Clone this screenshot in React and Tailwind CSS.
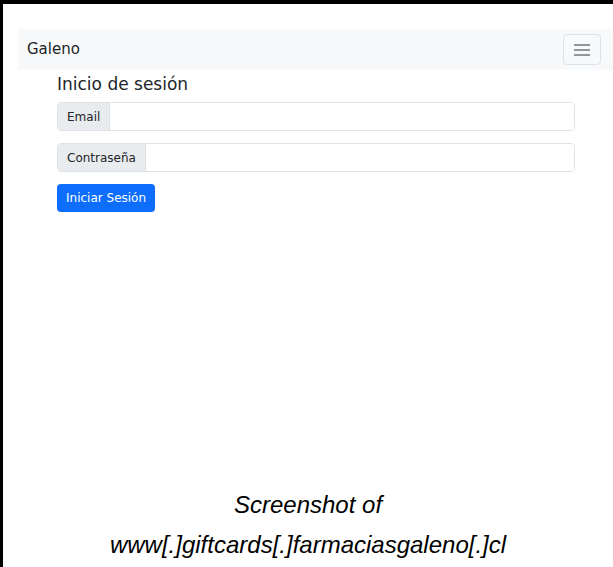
export default function App() {
  return (
    <div className="w-[613px] h-[567px] bg-black pt-[4px] pl-[3px] overflow-hidden">
      <div className="relative h-full bg-white pt-[25px]" style={{ fontFamily: '"DejaVu Sans", sans-serif' }}>
        {/* navbar */}
        <div className="ml-[15px] h-[41px] bg-[#f8f9fa] flex items-center justify-between pl-[9px] pr-[12px]">
          <span className="text-[15px] text-[#212529] leading-none">Galeno</span>
          <button className="w-[38px] h-[31px] border border-[#dee2e6] rounded-[4px] flex items-center justify-center">
            <svg width="20" height="16" viewBox="0 0 20 16">
              <path d="M2 3h16M2 8h16M2 13h16" stroke="#6c757d" strokeWidth="1.5" />
            </svg>
          </button>
        </div>

        {/* login form */}
        <div className="ml-[54px] w-[518px]">
          <h4 className="text-[17px] text-[#212529] leading-none mt-[6px] mb-[9px]">Inicio de sesión</h4>
          <div className="flex h-[29px] border border-[#dee2e6] rounded-[4px] overflow-hidden">
            <span className="bg-[#e9ecef] border-r border-[#dee2e6] px-[9px] flex items-center text-[12px] text-[#212529]">Email</span>
            <div className="flex-1 bg-white" />
          </div>
          <div className="flex h-[29px] mt-[12px] border border-[#dee2e6] rounded-[4px] overflow-hidden">
            <span className="bg-[#e9ecef] border-r border-[#dee2e6] px-[9px] flex items-center text-[12px] text-[#212529]">Contraseña</span>
            <div className="flex-1 bg-white" />
          </div>
          <button className="mt-[12px] h-[28px] px-[9px] bg-[#0d6efd] rounded-[4px] text-white text-[12px]">Iniciar Sesión</button>
        </div>

        {/* caption */}
        <div
          className="absolute left-0 right-0 top-[481px] text-center italic text-[24px] leading-[40px] text-black"
          style={{ fontFamily: '"Liberation Sans", Arial, sans-serif' }}
        >
          <div>Screenshot of</div>
          <div>www[.]giftcards[.]farmaciasgaleno[.]cl</div>
        </div>
      </div>
    </div>
  );
}
